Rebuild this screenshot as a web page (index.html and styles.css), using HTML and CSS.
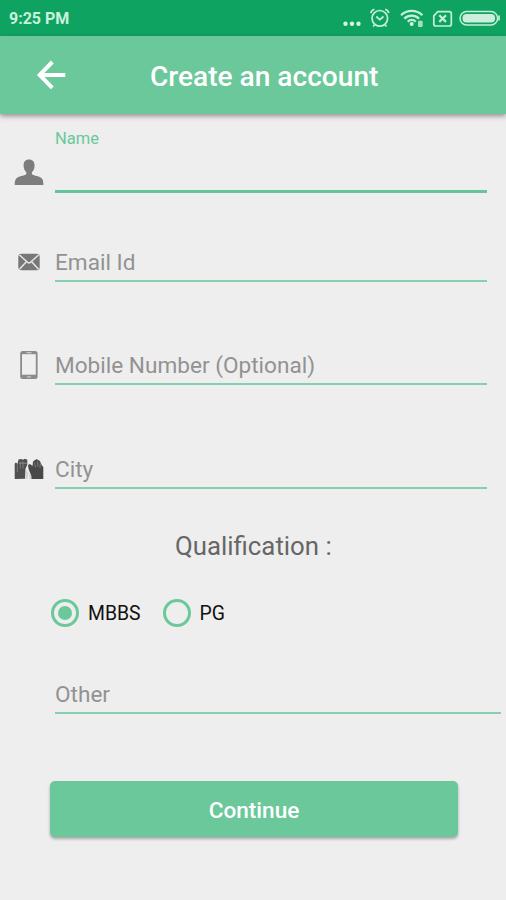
FILE: index.html
```html
<!DOCTYPE html>
<html lang="en">
  <head>
    <meta charset="UTF-8" />
    <meta name="viewport" content="width=device-width, initial-scale=1.0" />
    <title>Create an account</title>
    <link rel="stylesheet" href="styles.css">
  </head>
  <body>
    <!-- status bar -->
    <div class="status">
      <span class="time">9:25 PM</span>
      <svg class="status-icons" width="164" height="36" viewBox="0 0 164 36" fill="none" stroke="#c5efd8" stroke-width="1.7">
        <g fill="#d5f5e3" stroke="none">
          <circle cx="3.5" cy="23.7" r="2.2" />
          <circle cx="10" cy="23.7" r="2.2" />
          <circle cx="16.5" cy="23.7" r="2.2" />
        </g>
        <!-- alarm -->
        <circle cx="37.8" cy="18.3" r="7.8" />
        <path d="M34.3 16.5l3.5 3.2 3.7-3.2M28.8 13.2c.3-2 1.7-3.4 3.6-4M46.8 13.2c-.3-2-1.7-3.4-3.6-4M32.8 24.5l-1.7 2M42.8 24.5l1.7 2" />
        <!-- wifi -->
        <path d="M59 15.3c6-5.8 15.4-5.8 21.4 0M62.3 18.6c4.2-4 10.6-4 14.8 0M65.7 21.6c2.4-2 5.6-2 8 0" stroke-width="2.2" />
        <circle cx="69.7" cy="24" r="2" fill="#d5f5e3" stroke="none" />
        <rect x="76" y="20.8" width="4.7" height="6.2" rx="1" fill="#a5dfc2" stroke="none" />
        <!-- no sim -->
        <path d="M95.8 11.7h11.5q2 0 2 2v10.3q0 2-2 2H93.8q-2 0-2-2v-8.2z" />
        <path d="M97.3 15.3l6.7 6.6M104 15.3l-6.7 6.6" stroke-width="2.2" />
        <!-- battery -->
        <rect x="118" y="11.5" width="37.6" height="13.4" rx="6.7" stroke-width="1.5" />
        <rect x="120.5" y="13.9" width="32.6" height="8.6" rx="4" fill="#cdeedd" stroke="none" />
        <path d="M157 15.5v5" />
      </svg>
    </div>

    <div class="header">
      <svg class="back" width="30" height="30" viewBox="0 0 30 30" fill="none" stroke="#fff" stroke-width="4">
        <path d="M16.3 2L3.7 14.9l12.6 12.9M3.7 14.9H29.3" />
      </svg>
      <h1 class="title">Create an account</h1>
    </div>

    <div class="form">
      <div class="field field-name">
        <div class="icon">
          <svg width="30" height="28" viewBox="0 0 30 28" fill="#7d7d7d">
            <path d="M15 .5c3.6 0 5.6 2.3 5.6 6 0 3-1.1 5.3-2.7 6.8v2c1.5 1.2 5.5 1.5 8.3 3 2.3 1.2 3.2 3 3.2 7.700H.7c0-4.700 1-6.500 3.300-7.700 2.800-1.500 6.800-1.800 8.300-3v-2C10.700 11.800 9.600 9.500 9.600 6.500c0-3.700 1.800-6 5.400-6z" />
          </svg>
        </div>
        <div class="line">Name</div>
      </div>

      <div class="field field-email">
        <div class="icon">
          <svg width="22" height="18" viewBox="0 0 22 18">
            <rect x="0.3" y="0.8" width="21.4" height="16.4" rx="3" fill="#777" />
            <path d="M1.5 2l8 7.3q1.5 1.2 3 0L20.5 2M1.5 16.2l6.8-7.4M20.5 16.2l-6.8-7.4" fill="none" stroke="#e6e6e6" stroke-width="1.5" />
          </svg>
        </div>
        <div class="line">Email Id</div>
      </div>

      <div class="field field-mobile">
        <div class="icon">
          <svg width="20" height="30" viewBox="0 0 20 30">
            <rect x="1.2" y="1" width="17.4" height="28" rx="2.5" fill="#8b8b8b" />
            <rect x="3" y="4.2" width="13.8" height="20.5" fill="#eee" />
            <path d="M7.5 2.6h5M8 26.8h4" stroke="#c8c8c8" stroke-width="1.2" />
          </svg>
        </div>
        <div class="line">Mobile Number (Optional)</div>
      </div>

      <div class="field">
        <div class="icon">
          <!-- raised hands -->
          <svg width="30" height="22" viewBox="0 0 30 22">
            <path d="M.7 21V5.5L2 4.5 3.5 6l1-4.5L7 1l2 .7 2-.9 2.3 1v5l-1.8 4-.5 10z" fill="#505050" />
            <path d="M17 21v-4l-2.3-5.5-.7-4.5 2-1 2.5 2 .5-4.5 2-1.5 1.5-.8 2.5 1 1.5 2 1.3 3L29.3 9v12z" fill="#484848" />
            <path d="M3.3 6v8M6.3 3.5v7M9 3.5v7M20.5 4.5l1 5M23.5 3l.5 6M26.3 5l-.3 5" stroke="#888" stroke-width=".8" fill="none" />
            <path d="M5 5.2h8" stroke="#8a8a8a" />
            <path d="M12 12l2.5 2.5L13.5 21h-2zM15 15l2.5 3v3h-2z" fill="#d2d2d2" />
          </svg>
        </div>
        <div class="line">City</div>
      </div>

      <h2 class="subtitle">Qualification :</h2>

      <div class="radios">
        <div class="radio"><span class="circle checked"></span>MBBS</div>
        <div class="radio"><span class="circle"></span>PG</div>
      </div>

      <div class="line other">Other</div>

      <button class="btn" type="button">Continue</button>
    </div>
  </body>
</html>
```

FILE: styles.css
```css
* {
  margin: 0;
  padding: 0;
  box-sizing: border-box;
}
body {
  height: 900px;
  background-color: #eeeeee;
  font-family: Roboto, "Liberation Sans", sans-serif;
  overflow: hidden;
}
svg {
  display: block;
}
.status {
  display: flex;
  justify-content: space-between;
  height: 36px;
  padding-left: 9px;
  background-color: #0fa362;
}
.time {
  color: #c9f2dc;
  font-size: 16px;
  font-weight: 700;
  line-height: 38px;
}
.header {
  display: flex;
  align-items: center;
  height: 78px;
  padding-left: 36px;
  background-color: #6bc89b;
  box-shadow: 0 2px 5px rgba(70, 40, 55, 0.5);
}
.title {
  margin: 4px 0 0 84px;
  color: #fff;
  font-size: 28.1px;
  font-weight: 500;
  line-height: 36px;
  white-space: nowrap;
}
.form {
  display: flex;
  flex-direction: column;
}
/* each row ends with its green line */
.field {
  display: flex;
  align-items: flex-end;
  height: 41px;
  margin: 63px 19px 0 0;
}
.icon {
  display: flex;
  align-items: center;
  justify-content: center;
  width: 55px;
  height: 41px;
  padding-left: 2px;
}
.line {
  flex: 1;
  height: 41px;
  border-bottom: 2px solid #86cfae;
  color: #929292;
  font-size: 22.6px;
  line-height: 43px;
}
.field-name {
  height: 79px;
  margin-top: 0;
}
.field-name .line {
  height: 66px;
  border-bottom: 3px solid #65c49a;
  color: #6bc89b;
  font-size: 16.5px;
  line-height: 24px;
}
.field-email {
  margin-top: 48px;
}
.field-mobile {
  margin-top: 62px;
}
.subtitle {
  margin: 40px 0 0 175px;
  color: #666;
  font-size: 25.8px;
  font-weight: 400;
  line-height: 34px;
}
.radios {
  display: flex;
  gap: 22px;
  margin: 35px 0 0 51px;
}
.radio {
  display: flex;
  align-items: center;
  gap: 9px;
  height: 30px;
  color: #111;
  font-size: 19.4px;
  line-height: 30px;
}
.radio {
  padding-top: 2px;
}
.circle {
  display: flex;
  align-items: center;
  justify-content: center;
  width: 28px;
  height: 28px;
  margin-top: -2px;
  border: 3px solid #6bc89b;
  border-radius: 50%;
}
.checked::after {
  content: "";
  width: 14px;
  height: 14px;
  border-radius: 50%;
  background-color: #6bc89b;
}
.other {
  flex: none;
  margin: 45px 5px 0 55px;
}
.btn {
  width: 408px;
  height: 56px;
  margin: 67px 0 0 50px;
  padding-top: 2px;
  border: none;
  border-radius: 5px;
  background-color: #6bc89b;
  box-shadow: 0 2px 3px rgba(0, 0, 0, 0.3);
  color: #fff;
  font-family: inherit;
  font-size: 22.6px;
  font-weight: 500;
}
```
